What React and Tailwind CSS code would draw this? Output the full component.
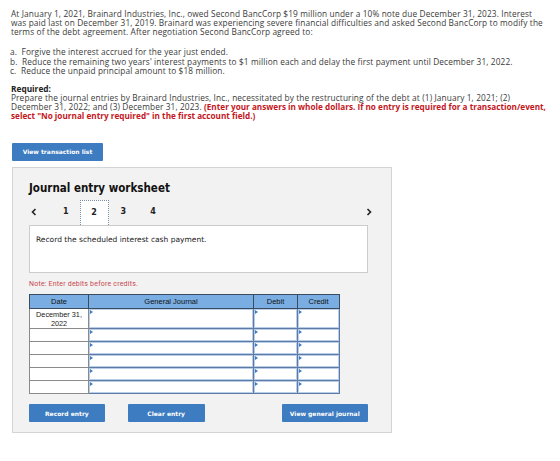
import React from "react";

const sans = { fontFamily: "'Open Sans', Lato, sans-serif" };

function Chevron({ dir }) {
  return (
    <svg width="6" height="8" viewBox="0 0 6 8" className="block">
      <path
        d={dir === "left" ? "M4.5 1 L1.5 4 L4.5 7" : "M1.5 1 L4.5 4 L1.5 7"}
        fill="none"
        stroke="#222"
        strokeWidth="1.6"
      />
    </svg>
  );
}

function Marker() {
  return (
    <span className="absolute left-[1px] top-[1px] w-0 h-0 border-y-[2px] border-y-transparent border-l-[3px] border-l-[#3d7cc0]" />
  );
}

function InputCell({ h }) {
  return (
    <td className={`relative p-0 border border-[#5f7ba3] bg-white ${h}`}>
      <div className="absolute inset-0 border border-[#b7cdea]" />
      <Marker />
    </td>
  );
}

function Row({ tall, date }) {
  const h = tall ? "h-[19px]" : "h-[13px]";
  return (
    <tr>
      <td className={`p-0 border border-[#8a8a8a] bg-white text-center align-top text-[7.3px] leading-[9px] text-[#222] ${h}`}>
        {date}
      </td>
      <InputCell h={h} />
      <InputCell h={h} />
      <InputCell h={h} />
    </tr>
  );
}

export default function App() {
  return (
    <div className="w-[560px] h-[461px] bg-white text-[#3a3a3a] overflow-hidden">
      <div className="pl-[11px] pt-[9px] text-[8.3px] leading-[9px] tracking-[0.12px]" style={sans}>
        <p>
          At January 1, 2021, Brainard Industries, Inc., owed Second BancCorp $19 million under a 10% note due December 31, 2023. Interest
          <br />
          was paid last on December 31, 2019. Brainard was experiencing severe financial difficulties and asked Second BancCorp to modify the
          <br />
          terms of the debt agreement. After negotiation Second BancCorp agreed to:
        </p>
        <div className="mt-[11px] -ml-[1px]">
          <div className="h-[9.5px]">a.&nbsp; Forgive the interest accrued for the year just ended.</div>
          <div className="h-[9.5px]">b.&nbsp; Reduce the remaining two years' interest payments to $1 million each and delay the first payment until December 31, 2022.</div>
          <div className="h-[9.5px]">c.&nbsp; Reduce the unpaid principal amount to $18 million.</div>
        </div>
        <div className="mt-[8px]">
          <div className="font-bold text-[#222] tracking-normal">Required:</div>
          <div>
            Prepare the journal entries by Brainard Industries, Inc., necessitated by the restructuring of the debt at (1) January 1, 2021; (2)
            <br />
            December 31, 2022; and (3) December 31, 2023.{" "}
            <span className="font-bold text-[#c4161c] tracking-normal text-[8.2px]">
              (Enter your answers in whole dollars. If no entry is required for a transaction/event,
              <br />
              select "No journal entry required" in the first account field.)
            </span>
          </div>
        </div>
      </div>

      <div className="pl-[12px] mt-[23px]">
        <button
          className="w-[91px] h-[18px] bg-[#3d7cc0] rounded-[1px] text-white text-[6px] font-bold flex items-center justify-center"
          style={{ fontFamily: "'DejaVu Sans', Tahoma, sans-serif" }}
        >
          View transaction list
        </button>

        <div
          className="mt-[6px] w-[380px] h-[266px] bg-[#f2f2f2] border border-[#d4d4d4] pl-[16px] pr-[23px] pt-[11px]"
          style={{ fontFamily: "'DejaVu Sans', Verdana, sans-serif" }}
        >
          <div
            className="text-[11.5px] font-bold text-[#111] leading-[18px]"
            style={{ fontFamily: "'DejaVu Sans Condensed', 'DejaVu Sans', sans-serif" }}
          >
            Journal entry worksheet
          </div>

          <div className="mt-[3px] h-[25px] flex items-center text-[8px] font-bold text-[#222]">
            <span className="ml-[2px]"><Chevron dir="left" /></span>
            <span className="ml-[26px]">1</span>
            <div className="ml-[11px] w-[29px] h-[25px] bg-white border border-dotted border-[#7a8ca8] border-b-0 flex items-center justify-center">
              2
            </div>
            <span className="ml-[12px]">3</span>
            <span className="ml-[24px]">4</span>
            <span className="ml-auto mr-[-4px]"><Chevron dir="right" /></span>
          </div>

          <div className="w-[339px] h-[48px] bg-white border border-[#cccccc] px-[6px] pt-[8px] text-[7.5px] text-[#222]">
            Record the scheduled interest cash payment.
          </div>

          <div
            className="mt-[6px] text-[7px] tracking-[0.2px] text-[#c8474d]"
            style={{ fontFamily: "Roboto, 'Liberation Sans', sans-serif" }}
          >
            Note: Enter debits before credits.
          </div>

          <table
            className="mt-[5px] border-collapse table-fixed w-[310px]"
            style={{ fontFamily: "'Liberation Sans', Arial, sans-serif" }}
          >
            <colgroup>
              <col className="w-[59px]" />
              <col className="w-[165px]" />
              <col className="w-[44px]" />
              <col className="w-[42px]" />
            </colgroup>
            <thead>
              <tr className="h-[14px] bg-[#7aaee2] text-[7.5px] text-[#111]">
                <th className="font-normal border border-[#3c4c60] p-0 leading-[12px]">Date</th>
                <th className="font-normal border border-[#3c4c60] p-0 leading-[12px]">General Journal</th>
                <th className="font-normal border border-[#3c4c60] p-0 leading-[12px]">Debit</th>
                <th className="font-normal border border-[#3c4c60] p-0 leading-[12px]">Credit</th>
              </tr>
            </thead>
            <tbody>
              <Row tall date={<div className="pt-[1px]">December 31,<br />2022</div>} />
              <Row />
              <Row />
              <Row />
              <Row />
              <Row />
            </tbody>
          </table>

          <div
            className="mt-[10px] flex text-white text-[6px] font-bold"
            style={{ fontFamily: "'DejaVu Sans', Tahoma, sans-serif" }}
          >
            <button className="w-[78px] h-[18px] bg-[#3d7cc0] rounded-[1px] flex items-center justify-center">Record entry</button>
            <button className="ml-[23px] w-[79px] h-[18px] bg-[#3d7cc0] rounded-[1px] flex items-center justify-center">Clear entry</button>
            <button className="ml-[77px] w-[89px] h-[18px] bg-[#3d7cc0] rounded-[1px] flex items-center justify-center">View general journal</button>
          </div>
        </div>
      </div>
    </div>
  );
}
